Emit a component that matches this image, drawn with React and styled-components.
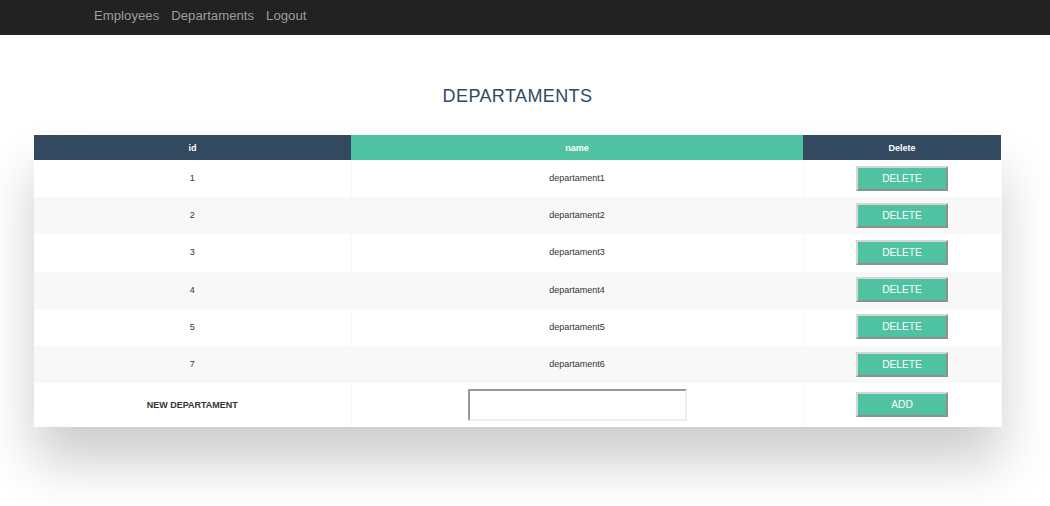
import React from "react";
import styled, { createGlobalStyle } from "styled-components";

const GlobalStyle = createGlobalStyle`
  html, body { margin: 0; padding: 0; background: #ffffff; }
  body { font-family: "Liberation Sans", Arial, sans-serif; }
`;

const NavBar = styled.nav`
  height: 35px;
  box-sizing: border-box;
  background: #222222;
  display: flex;
  align-items: flex-start;
  padding: 8px 0 0 88px;
`;

const NavLink = styled.a`
  font-size: 13.2px;
  line-height: 15px;
  color: #9d9d9d;
  padding: 0 6px;
  text-decoration: none;
  cursor: pointer;
`;

const Main = styled.main`
  width: 967px;
  margin-left: 34px;
  padding: 51px 0 80px;
`;

const Title = styled.h2`
  margin: 0 0 28px;
  text-align: center;
  font-size: 18px;
  line-height: 21px;
  font-weight: normal;
  letter-spacing: 0.4px;
  text-transform: uppercase;
  color: #324960;
`;

const TableWrapper = styled.div`
  box-shadow: 0 35px 50px rgba(0, 0, 0, 0.2);
  background: #ffffff;
`;

const Table = styled.table`
  width: 100%;
  border-collapse: collapse;
  table-layout: fixed;
  white-space: nowrap;
  background: #ffffff;
  font-size: 9px;
`;

const Th = styled.th`
  height: 25px;
  padding: 0 6px;
  box-sizing: border-box;
  text-align: center;
  font-weight: bold;
  color: #ffffff;
  background: ${(p) => (p.$accent ? "#4fc3a1" : "#324960")};
`;

const Row = styled.tr`
  background: ${(p) => (p.$shaded ? "#f8f8f8" : "#ffffff")};
`;

const Td = styled.td`
  height: ${(p) => (p.$tall ? "44px" : "37.2px")};
  padding: 0 6px 1px;
  box-sizing: border-box;
  text-align: center;
  color: #333333;
  border-right: 1px solid #f8f8f8;
  font-weight: ${(p) => (p.$bold ? "bold" : "normal")};
  vertical-align: middle;
`;

const ActionButton = styled.button`
  width: 92px;
  height: 25px;
  box-sizing: border-box;
  background: #4fc3a1;
  color: #ffffff;
  font-family: "Liberation Sans", Arial, sans-serif;
  font-size: 10.2px;
  text-transform: uppercase;
  border-style: solid;
  border-width: 2px;
  border-color: #d6d6d6 #8f8f8f #8f8f8f #d6d6d6;
  padding: 0;
  cursor: pointer;
  display: inline-flex;
  align-items: center;
  justify-content: center;
`;

const NameInput = styled.input`
  width: 219px;
  height: 32px;
  box-sizing: border-box;
  border-style: solid;
  border-width: 2px;
  border-color: #9a9a9a #eeeeee #eeeeee #9a9a9a;
  background: #ffffff;
  padding: 0 4px;
  font-size: 12px;
  vertical-align: middle;
`;

const departaments = [
  { id: 1, name: "departament1" },
  { id: 2, name: "departament2" },
  { id: 3, name: "departament3" },
  { id: 4, name: "departament4" },
  { id: 5, name: "departament5" },
  { id: 7, name: "departament6" },
];

export default function App() {
  return (
    <>
      <GlobalStyle />
      <NavBar>
        <NavLink>Employees</NavLink>
        <NavLink>Departaments</NavLink>
        <NavLink>Logout</NavLink>
      </NavBar>
      <Main>
        <Title>Departaments</Title>
        <TableWrapper>
          <Table>
            <colgroup>
              <col style={{ width: "317px" }} />
              <col style={{ width: "452px" }} />
              <col style={{ width: "198px" }} />
            </colgroup>
            <thead>
              <tr>
                <Th>id</Th>
                <Th $accent>name</Th>
                <Th>Delete</Th>
              </tr>
            </thead>
            <tbody>
              {departaments.map((d, i) => (
                <Row key={d.id} $shaded={i % 2 === 1}>
                  <Td>{d.id}</Td>
                  <Td>{d.name}</Td>
                  <Td>
                    <ActionButton>Delete</ActionButton>
                  </Td>
                </Row>
              ))}
              <Row>
                <Td $tall $bold>NEW DEPARTAMENT</Td>
                <Td $tall>
                  <NameInput type="text" />
                </Td>
                <Td $tall>
                  <ActionButton>Add</ActionButton>
                </Td>
              </Row>
            </tbody>
          </Table>
        </TableWrapper>
      </Main>
    </>
  );
}
